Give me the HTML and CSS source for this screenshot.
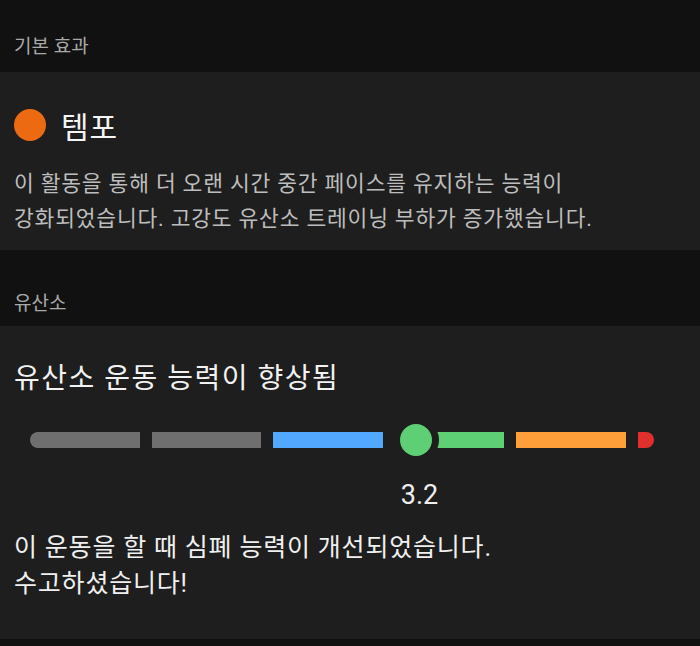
FILE: index.html
```html
<!DOCTYPE html>
<html lang="ko">
<head>
    <meta charset="UTF-8">
    <meta name="viewport" content="width=device-width, initial-scale=1.0">
    <title>운동 효과</title>
    <link rel="stylesheet" href="styles.css">
</head>
<body>
    <div class="section-head">기본 효과</div>
    <div class="card">
        <div class="effect-title">
            <span class="dot-orange"></span>
            <span>템포</span>
        </div>
        <p class="desc">이 활동을 통해 더 오랜 시간 중간 페이스를 유지하는 능력이<br>강화되었습니다. 고강도 유산소 트레이닝 부하가 증가했습니다.</p>
    </div>

    <div class="section-head second">유산소</div>
    <div class="card card-aero">
        <h2 class="aero-title">유산소 운동 능력이 향상됨</h2>
        <div class="gauge">
            <div class="track">
                <span class="seg gray first"></span>
                <span class="seg gray"></span>
                <span class="seg blue"></span>
                <span class="seg green"></span>
                <span class="seg orange"></span>
                <span class="seg red"></span>
            </div>
            <!-- marker position comes from the score -->
            <div class="marker" style="left: 386px;">
                <span class="marker-dot"></span>
                <span class="marker-value">3.2</span>
            </div>
        </div>
        <p class="result">이 운동을 할 때 심폐 능력이 개선되었습니다.<br>수고하셨습니다!</p>
    </div>
</body>
</html>
```

FILE: styles.css
```css
body {
    margin: 0;
    background: #111111;
    font-family: Roboto, "Noto Sans CJK KR", sans-serif;
}

.section-head {
    padding: 35px 14px 13px;
    font-size: 19px;
    line-height: 24px;
    color: #a9a9a9;
}
.section-head.second {
    padding-top: 42px;
    padding-bottom: 10px;
}

.card {
    background: #1e1e1e;
    padding: 37px 14px 14px;
}

.effect-title {
    display: flex;
    align-items: center;
    gap: 15px;
    height: 32px;
    font-size: 30px;
    font-weight: 400;
    letter-spacing: 1px;
    color: #f5f5f5;
}
.dot-orange {
    width: 32px;
    height: 32px;
    border-radius: 50%;
    background: #ec6a12;
}

.desc {
    margin: 25px 0 0;
    font-size: 21.5px;
    line-height: 35px;
    letter-spacing: 0.8px;
    color: #bdbdbd;
}

.card-aero {
    padding-top: 35px;
    padding-bottom: 37px;
}

.aero-title {
    margin: 0;
    font-size: 28px;
    font-weight: 400;
    line-height: 36px;
    letter-spacing: 1.5px;
    color: #f2f2f2;
}

.gauge {
    position: relative;
    margin: 27px 0 0 16px;
    height: 106px;
}

.track {
    display: flex;
    align-items: center;
    gap: 12px;
    height: 32px;
}
.seg {
    width: 109.5px;
    height: 16px;
}
.seg.first {
    border-radius: 8px 0 0 8px;
}
.gray {
    background: #6f6f6f;
}
.blue {
    background: #52a7ff;
}
.green {
    background: #5ecf74;
}
.orange {
    background: #ff9f3a;
}
.red {
    width: 16px;
    background: #e0302e;
    border-radius: 0 8px 8px 0;
}

.marker {
    position: absolute;
    top: 0;
    width: 0;
    display: flex;
    flex-direction: column;
    align-items: center;
}
.marker-dot {
    flex: none;
    width: 32px;
    height: 32px;
    border-radius: 50%;
    background: #5ecf74;
    box-shadow: 0 0 0 7px #1e1e1e;
}
.marker-value {
    margin-top: 23px;
    margin-left: 7px;
    font-size: 27px;
    line-height: 32px;
    color: #eeeeee;
    white-space: nowrap;
}

.result {
    margin: 0;
    font-size: 25px;
    line-height: 36px;
    letter-spacing: 0.8px;
    color: #f0f0f0;
}
```
